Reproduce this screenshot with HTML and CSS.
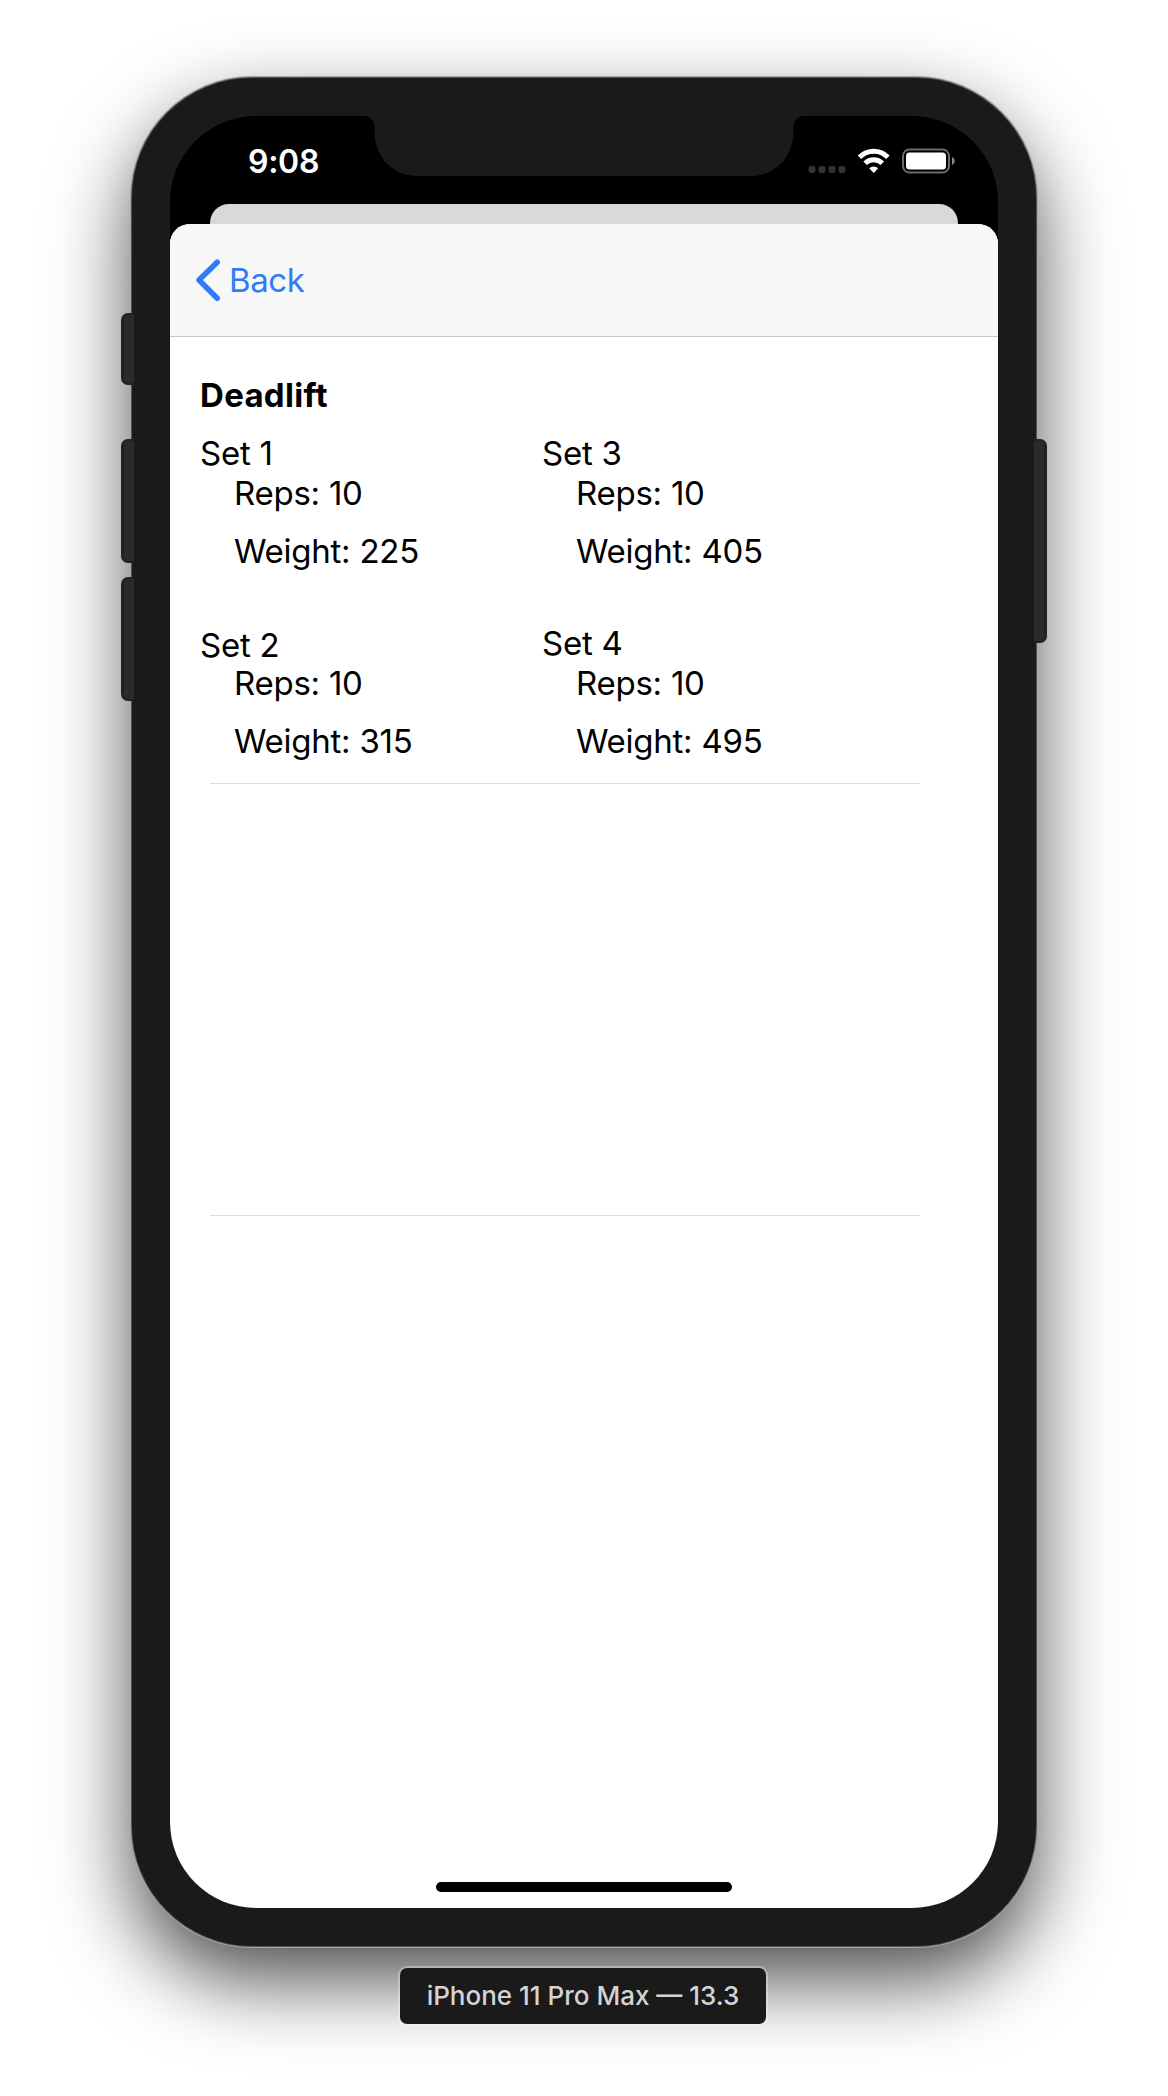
FILE: index.html
```html
<!DOCTYPE html>
<html lang="en">
<head>
<meta charset="utf-8">
<title>Deadlift</title>
<link rel="stylesheet" href="styles.css">
</head>
<body>
<main class="simulator">
  <div class="phone">
    <span class="key key-mute"></span>
    <span class="key key-up"></span>
    <span class="key key-down"></span>
    <span class="key key-power"></span>
    <div class="screen">
      <header class="status">
        <span class="time">9:08</span>
        <svg class="notch" viewBox="0 0 444 60" width="444" height="60"><path d="M0 0C9 0 12.500 4 12.500 12V14C12.500 40 29 60 56 60H388C415 60 431.500 40 431.500 14V12C431.500 4 435 0 444 0Z"/></svg>
        <svg class="indicators" viewBox="806 145 155 32" width="155" height="32">
          <g fill="#333"><rect x="808.5" y="166" width="7" height="7" rx="2.4"/><rect x="818.5" y="166" width="7" height="7" rx="2.4"/><rect x="828.5" y="166" width="7" height="7" rx="2.4"/><rect x="838.5" y="166" width="7" height="7" rx="2.4"/></g>
          <g fill="none" stroke="#fff" stroke-width="5"><path d="M859.5 157.200a20 20 0 0 1 28.400 0"/><path d="M865.100 163.200a12.200 12.200 0 0 1 17.200 0"/></g>
          <path fill="#fff" d="M869.200 168.300a6.800 6.800 0 0 1 9 0L873.700 173Z"/>
          <rect x="903" y="149.5" width="46" height="23" rx="6.5" fill="none" stroke="#6b6b6b" stroke-width="2"/>
          <rect x="906" y="152.5" width="40" height="17" rx="3.5" fill="#fff"/>
          <path fill="#8a8a8a" d="M952 157c3.600 1.500 3.600 6.500 0 8Z"/>
        </svg>
      </header>
      <div class="stack">
        <div class="sheet-behind"></div>
        <section class="sheet">
          <nav class="navbar">
            <svg class="chevron" viewBox="0 0 26 44" width="26" height="44"><path d="M23.200 4.200 5 22 23.200 40.300"/></svg>
            <a class="back">Back</a>
          </nav>
          <div class="content">
            <h1 class="title">Deadlift</h1>
            <div class="sets">
              <div class="column">
                <div class="set"><p>Set 1</p><p class="reps">Reps: 10</p><p class="weight">Weight: 225</p></div>
                <div class="set set-late"><p>Set 2</p><p class="reps">Reps: 10</p><p class="weight">Weight: 315</p></div>
              </div>
              <div class="column">
                <div class="set"><p>Set 3</p><p class="reps">Reps: 10</p><p class="weight">Weight: 405</p></div>
                <div class="set"><p>Set 4</p><p class="reps">Reps: 10</p><p class="weight">Weight: 495</p></div>
              </div>
            </div>
            <hr class="rule">
            <hr class="rule rule-next">
          </div>
          <div class="home"></div>
        </section>
      </div>
    </div>
  </div>
  <div class="device-name">iPhone 11 Pro Max — 13.3</div>
</main>
</body>
</html>
```
FILE: styles.css
```css
* { box-sizing: border-box; }
body {
  margin: 0;
  background: #fff;
  font-family: Inter, "Liberation Sans", sans-serif;
  color: #000;
}
.simulator {
  height: 2096px;
  padding-top: 78px;
  display: flex;
  flex-direction: column;
  align-items: center;
}
.phone {
  position: relative;
  flex: none;
  width: 904px;
  height: 1868px;
  padding: 38px;
  border-radius: 120px;
  background: #1a1a1a;
  box-shadow: 0 0 0 1px #555, 0 0 0 2px #a4a4a4, 0 34px 80px rgba(0, 0, 0, .7);
}
.key {
  position: absolute;
  left: -11px;
  width: 13px;
  background: #2b2b2b;
  border: 2px solid #222;
  border-left-width: 3px;
  border-right: 0;
  border-radius: 7px 0 0 7px;
}
.key-mute { top: 235px; height: 72px; }
.key-up { top: 361px; height: 124px; }
.key-down { top: 499px; height: 124px; }
.key-power {
  top: 361px;
  left: auto;
  right: -11px;
  height: 204px;
  border-left: 0;
  border-right: 3px solid #222;
  border-radius: 0 7px 7px 0;
}
.screen {
  height: 1792px;
  border-radius: 86px;
  overflow: hidden;
  background: #000;
  display: flex;
  flex-direction: column;
}
.status {
  height: 88px;
  display: grid;
  grid-template-columns: 192px 444px 192px;
}
.time {
  padding: 26px 0 0 78px;
  font-size: 32px;
  line-height: 40px;
  font-weight: 600;
  color: #fff;
  letter-spacing: -.3px;
}
.notch { fill: #1a1a1a; }
.indicators { margin-top: 29px; }
.stack { flex: 1; display: flex; flex-direction: column; }
.sheet-behind {
  height: 20px;
  margin: 0 40px;
  background: #d9d9d9;
  border-radius: 19px 19px 0 0;
}
.sheet {
  flex: 1;
  display: flex;
  flex-direction: column;
  background: #fff;
  border-radius: 20px 20px 0 0;
  overflow: hidden;
}
.navbar {
  height: 113px;
  padding-left: 24px;
  display: flex;
  align-items: center;
  gap: 9px;
  background: #f7f7f8;
  border-bottom: 1px solid #c8c8ca;
}
.chevron {
  fill: none;
  stroke: #2f7cf6;
  stroke-width: 5.5px;
  stroke-linecap: round;
  stroke-linejoin: round;
}
.back { font-size: 33px; line-height: 40px; color: #2f7cf6; letter-spacing: -.4px; }
.content { flex: 1; padding-left: 30px; font-size: 33px; line-height: 40px; }
.title { margin: 38px 0 18px; font-size: 33px; line-height: 40px; font-weight: 700; letter-spacing: .3px; }
.sets { display: grid; grid-template-columns: 342px 342px; height: 350px; }
.column { display: flex; flex-direction: column; gap: 52px; }
.set p { margin: 0; letter-spacing: -.25px; }
.set .reps, .set .weight { padding-left: 34px; }
.set .weight { margin-top: 18px; }
.set-late { margin-top: 2px; }
.set-late .reps { margin-top: -2px; }
.rule { width: 710px; height: 1px; margin: 0 0 0 10px; border: 0; background: #dcdcdd; }
.rule-next { margin-top: 431px; }
.home { width: 296px; height: 10px; margin: 0 auto 16px; border-radius: 5px; background: #000; }
.device-name {
  width: 366px;
  height: 56px;
  margin: 22px 2px 0 0;
  border-radius: 7px;
  background: #1a1a1a;
  box-shadow: 0 0 0 2px rgba(255, 255, 255, .3);
  color: #d4d4d4;
  font-size: 26px;
  font-weight: 500;
  line-height: 56px;
  text-align: center;
  letter-spacing: 0;
  white-space: nowrap;
  position: relative;
}
```
